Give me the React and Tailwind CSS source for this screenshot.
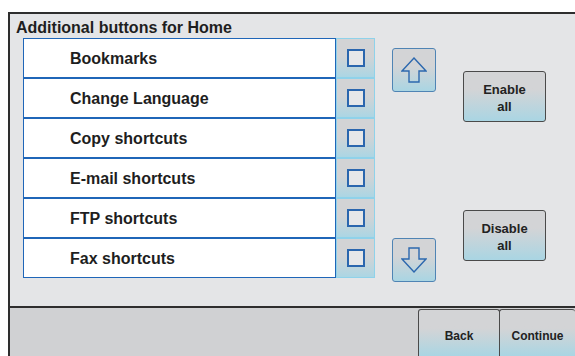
import React from 'react';

const items = ['Bookmarks', 'Change Language', 'Copy shortcuts', 'E-mail shortcuts', 'FTP shortcuts', 'Fax shortcuts'];

const ArrowButton = ({ down }) => (
  <button className="w-[44px] h-[44px] rounded-[3px] border border-[#4f84b4] bg-gradient-to-b from-[#d3d4d6] from-40% to-[#a9d5e3] flex items-center justify-center">
    <svg width="26" height="26" viewBox="-1 -1 26 26" fill="none" stroke="#2c68ae" strokeWidth="1.4" strokeLinejoin="miter">
      {down ? (
        <path d="M12 24 L24 11 H17 V0 H7 V11 H0 Z" />
      ) : (
        <path d="M12 0 L24 13 H17 V24 H7 V13 H0 Z" />
      )}
    </svg>
  </button>
);

const ActionButton = ({ children }) => (
  <button className="w-[83px] h-[51px] pt-[3px] rounded-[3px] border border-[#4a4a4a] bg-gradient-to-b from-[#d3d4d6] from-35% to-[#a9d5e3] text-[13px] leading-[17px] font-bold text-[#222]">
    {children}
  </button>
);

export default function App() {
  return (
    <div className="w-[575px] h-[356px] bg-white overflow-hidden" style={{ fontFamily: '"Liberation Sans", Arial, sans-serif' }}>
      <div className="ml-[8px] mt-[12px] h-[344px] border-l-2 border-t-2 border-[#2e2e2e] bg-[#e4e5e7] flex flex-col">
        <div className="h-[292px]">
          <div className="h-[24px] pl-[6px] pt-[5px] text-[16px] leading-[18px] font-bold text-[#1e1e1e]">
            Additional buttons for Home
          </div>
          <div className="flex pl-[13px]">
            <div className="w-[352px] flex flex-col">
              {items.map((label) => (
                <div key={label} className="flex h-[40px]">
                  <div className="w-[313px] h-full bg-white border border-[#1f66b8] flex items-center pl-[46px] pt-[2px] text-[16px] font-bold text-[#1e1e1e]">
                    {label}
                  </div>
                  <div className="w-[39px] h-full border border-[#8fd2ea] bg-gradient-to-b from-[#d2d3d5] from-45% to-[#abd6e4] flex items-center justify-center">
                    <div className="w-[18px] h-[18px] border-2 border-[#2a66ae] bg-[#e6e7e9]" />
                  </div>
                </div>
              ))}
            </div>
            <div className="ml-[17px] pt-[10px] h-[244px] flex flex-col justify-between">
              <ArrowButton />
              <ArrowButton down />
            </div>
            <div className="ml-[27px] pt-[33px] flex flex-col gap-[88px]">
              <ActionButton>Enable<br />all</ActionButton>
              <ActionButton>Disable<br />all</ActionButton>
            </div>
          </div>
        </div>
        <div className="flex-1 border-t-2 border-[#2e2e2e] bg-[#d0d1d3] flex justify-end items-end">
          <button className="w-[82px] h-[47px] rounded-t-[3px] border border-b-0 border-[#4a4a4a] bg-gradient-to-b from-[#d3d4d6] from-40% to-[#a9d5e3] text-[12px] font-bold text-[#222] pt-[5px]">
            Back
          </button>
          <button className="w-[76px] h-[47px] -ml-px rounded-t-[3px] border border-b-0 border-r-0 border-[#4a4a4a] bg-gradient-to-b from-[#d3d4d6] from-40% to-[#a9d5e3] text-[12px] font-bold text-[#222] pt-[5px]">
            Continue
          </button>
        </div>
      </div>
    </div>
  );
}
